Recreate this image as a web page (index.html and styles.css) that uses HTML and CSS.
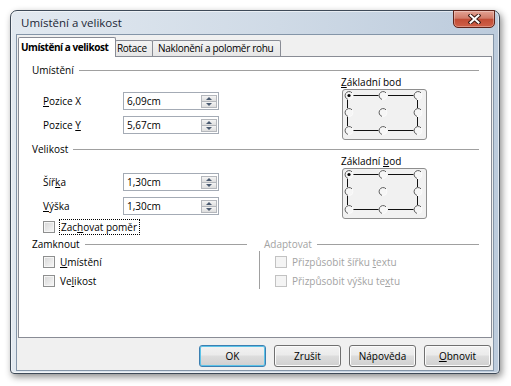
FILE: index.html
```html
<!DOCTYPE html>
<html lang="cs">
<head>
  <meta charset="UTF-8" />
  <title>Umístění a velikost</title>
  <link rel="stylesheet" href="styles.css">
</head>
<body>

  <svg class="defs" width="0" height="0">
    <defs>
      <g id="radio">
        <circle r="4" fill="#f6f6f6" stroke="#fbfbfb"/>
        <path d="M-1 3.9A4 4 0 1 1 3 -2.7" fill="none" stroke="#5c5c5c"/>
      </g>
      <symbol id="basepoint" viewBox="0 0 83 49">
        <path d="M10 5.5H36M45 5.5H71M10 40.5H36M45 40.5H71M4.5 10V18M4.5 27V36M74.5 10V18M74.5 27V36" stroke="#111" fill="none" shape-rendering="crispEdges"/>
        <use href="#radio" x="6" y="5.5"/>
        <use href="#radio" x="40" y="5.5"/>
        <use href="#radio" x="75" y="5.5"/>
        <use href="#radio" x="6" y="22.5"/>
        <use href="#radio" x="40" y="22.5"/>
        <use href="#radio" x="75" y="22.5"/>
        <use href="#radio" x="6" y="40.5"/>
        <use href="#radio" x="40" y="40.5"/>
        <use href="#radio" x="75" y="40.5"/>
        <circle cx="6" cy="5.5" r="1.6" fill="#000"/>
      </symbol>
    </defs>
  </svg>

  <div class="window">
    <div class="titlebar">
      <span class="title">Umístění a velikost</span>
      <button class="close">
        <svg width="13" height="10" viewBox="0 0 13 10">
          <path d="M2.5 1.5L10.5 8.5M10.5 1.5L2.5 8.5" stroke="#3b1a14" stroke-width="4" stroke-linecap="square"/>
          <path d="M2.5 1.5L10.5 8.5M10.5 1.5L2.5 8.5" stroke="#fff" stroke-width="2" stroke-linecap="square"/>
        </svg>
      </button>
    </div>

    <div class="client">
      <div class="tabs">
        <div class="tab active">Umístění a velikost</div>
        <div class="tab tab-rot">Rotace</div>
        <div class="tab tab-skew">Naklonění a poloměr rohu</div>
      </div>

      <div class="page">
        <!-- Umístění -->
        <div class="group">
          <div class="group-head"><span>Umístění</span></div>
          <div class="group-body">
            <div class="fields">
              <div class="field">
                <label><u>P</u>ozice X</label>
                <div class="spin"><span>6,09cm</span><div class="spin-btns"><i class="up"></i><i class="down"></i></div></div>
              </div>
              <div class="field">
                <label>Pozice <u>Y</u></label>
                <div class="spin"><span>5,67cm</span><div class="spin-btns"><i class="up"></i><i class="down"></i></div></div>
              </div>
            </div>
            <div class="basepoint">
              <div class="bp-label"><u>Z</u>ákladní bod</div>
              <div class="bp-box"><svg width="83" height="49"><use href="#basepoint"/></svg></div>
            </div>
          </div>
        </div>

        <!-- Velikost -->
        <div class="group group-size">
          <div class="group-head"><span>Velikost</span></div>
          <div class="group-body">
            <div class="fields fields-size">
              <div class="field">
                <label>Šíř<u>k</u>a</label>
                <div class="spin"><span>1,30cm</span><div class="spin-btns"><i class="up"></i><i class="down"></i></div></div>
              </div>
              <div class="field">
                <label><u>V</u>ýška</label>
                <div class="spin"><span>1,30cm</span><div class="spin-btns"><i class="up"></i><i class="down"></i></div></div>
              </div>
              <div class="check-row">
                <span class="check"></span>
                <span class="focus">Zac<u>h</u>ovat poměr</span>
              </div>
            </div>
            <div class="basepoint">
              <div class="bp-label">Základní <u>b</u>od</div>
              <div class="bp-box"><svg width="83" height="49"><use href="#basepoint"/></svg></div>
            </div>
          </div>
        </div>

        <!-- Zamknout / Adaptovat -->
        <div class="group-row">
          <div class="subgroup lock">
            <div class="group-head"><span>Zamknout</span></div>
            <div class="checks">
              <div class="check-item"><span class="check"></span><span><u>U</u>místění</span></div>
              <div class="check-item"><span class="check"></span><span>Ve<u>l</u>ikost</span></div>
            </div>
          </div>
          <div class="vsep"></div>
          <div class="subgroup adapt disabled">
            <div class="group-head"><span>Adaptovat</span></div>
            <div class="checks">
              <div class="check-item"><span class="check"></span><span>Přizpůsobit šířku <u>t</u>extu</span></div>
              <div class="check-item"><span class="check"></span><span>Přizpůsobit výšku te<u>x</u>tu</span></div>
            </div>
          </div>
        </div>
      </div>

      <div class="buttons">
        <button class="btn default">OK</button>
        <button class="btn">Zrušit</button>
        <button class="btn">Nápověda</button>
        <button class="btn"><u>O</u>bnovit</button>
      </div>
    </div>
  </div>

</body>
</html>
```

FILE: styles.css
```css
html, body {
  margin: 0;
  padding: 0;
}

body {
  width: 511px;
  height: 386px;
  overflow: hidden;
  background: #fff;
  font-family: "Open Sans", "Noto Sans", sans-serif;
  font-size: 10px;
  color: #000;
}

u {
  text-decoration-thickness: 1px;
  text-underline-offset: 1px;
}

.defs {
  position: absolute;
  width: 0;
  height: 0;
}

/* window frame */

.window {
  margin: 10px 0 0 10px;
  width: 490px;
  height: 364px;
  box-sizing: border-box;
  padding: 0 5px 2px;
  display: flex;
  flex-direction: column;
  border: 1px solid #3e4a58;
  border-radius: 7px 7px 4px 4px;
  background: linear-gradient(to right, #e2e9f0, #cfdae6 55%, #bccbdc);
  box-shadow: 2px 3px 7px rgba(0, 0, 0, 0.45), inset 0 0 0 1px rgba(255, 255, 255, 0.55);
}

.titlebar {
  height: 23px;
  margin: 0 -5px;
  padding: 0 4px 0 10px;
  display: flex;
  justify-content: space-between;
  align-items: flex-start;
}

.title {
  line-height: 23px;
  font-size: 11.5px;
  color: #1b2635;
}

.close {
  width: 42px;
  height: 18px;
  margin-top: -1px;
  padding: 0;
  display: flex;
  align-items: center;
  justify-content: center;
  border: 1px solid #5e231a;
  border-radius: 0 0 5px 5px;
  background: linear-gradient(#e4a394, #d17b69 45%, #c24d36 52%, #cf6048);
  box-shadow: inset 0 0 0 1px rgba(255, 255, 255, 0.3);
}

.client {
  flex: 1;
  display: flex;
  flex-direction: column;
  padding: 2px 1px 0;
  background: #f0f0f0;
  border: 1px solid #8495a8;
}

/* tabs */

.tabs {
  display: flex;
  align-items: flex-end;
  height: 20px;
  margin-bottom: -1px;
  position: relative;
  z-index: 1;
}

.tab {
  box-sizing: border-box;
  height: 16px;
  margin-bottom: 1px;
  margin-left: -1px;
  border: 1px solid #898c95;
  border-bottom: none;
  border-radius: 2px 2px 0 0;
  background: linear-gradient(#f3f3f3, #e6e6e6);
  line-height: 14px;
  letter-spacing: -0.3px;
  white-space: nowrap;
}

.tab.active {
  height: 20px;
  width: 98px;
  margin: 0;
  padding-left: 2px;
  background: #fff;
  font-weight: bold;
  letter-spacing: -0.45px;
  line-height: 18px;
}

.tab-rot {
  width: 38px;
  padding-left: 1px;
}

.tab-skew {
  width: 129px;
  padding-left: 5px;
}

.page {
  box-sizing: border-box;
  height: 282px;
  padding: 7px 12px 0 13px;
  background: #fff;
  border: 1px solid #898c95;
}

/* groups */

.group-head {
  display: flex;
  align-items: center;
  height: 12px;
  line-height: 12px;
}

.group-head::after {
  content: "";
  flex: 1;
  margin-left: 5px;
  border-top: 1px solid #a0a0a0;
}

.group-body {
  display: flex;
}

.group-size {
  margin-top: 3px;
}

.fields {
  flex: 1;
  padding: 16px 0 0 11px;
}

.fields-size {
  padding-top: 18px;
}

.field {
  display: flex;
  align-items: center;
  height: 18px;
  margin-bottom: 6px;
}

.field label {
  width: 80px;
}

.spin {
  box-sizing: border-box;
  width: 96px;
  height: 18px;
  padding: 0 1px 0 3px;
  display: flex;
  align-items: center;
  justify-content: space-between;
  border: 1px solid #a4abb5;
  background: #fff;
}

.spin-btns {
  width: 16px;
  height: 13px;
  display: flex;
  flex-direction: column;
}

.spin-btns i {
  flex: 1;
  display: flex;
  align-items: center;
  justify-content: center;
  border: 1px solid #b4b7bc;
  background: linear-gradient(#f4f4f4, #dedede);
}

.spin-btns i + i {
  border-top: none;
}

.spin-btns .up::after {
  content: "";
  border-left: 3px solid transparent;
  border-right: 3px solid transparent;
  border-bottom: 3px solid #4a5a70;
}

.spin-btns .down::after {
  content: "";
  border-left: 3px solid transparent;
  border-right: 3px solid transparent;
  border-top: 3px solid #4a5a70;
}

.basepoint {
  width: 85px;
  margin-right: 52px;
}

.bp-label {
  height: 12px;
  line-height: 12px;
  margin-left: -1px;
  white-space: nowrap;
}

.bp-box {
  box-sizing: border-box;
  width: 85px;
  height: 51px;
  margin-top: 1px;
  border: 1px solid #8e8e8e;
  border-radius: 3px;
  background: #f1f1f1;
}

.bp-box svg {
  display: block;
}

/* checkboxes */

.check {
  box-sizing: border-box;
  width: 12px;
  height: 12px;
  flex: none;
  border: 1px solid #8e8f8f;
  background: linear-gradient(135deg, #d6d6d6, #f8f8f8);
  box-shadow: inset 0 0 0 1px #f6f6f6;
}

.check-row {
  display: flex;
  align-items: center;
  height: 12px;
  margin-top: 2px;
}

.focus {
  margin-left: 4px;
  padding: 1px 2px 1px 1px;
  line-height: 12px;
  border: 1px dotted #000;
}

.group-row {
  display: flex;
  margin-top: 5px;
}

.subgroup.lock {
  width: 215px;
}

.subgroup.adapt {
  flex: 1;
}

.vsep {
  width: 1px;
  height: 38px;
  margin: 13px 4px 0 12px;
  background: #a0a0a0;
}

.checks {
  padding: 6px 0 0 11px;
}

.check-item {
  display: flex;
  align-items: center;
  height: 12px;
  margin-bottom: 7px;
}

.check-item .check + span {
  margin-left: 5px;
}

.disabled {
  color: #a3a3a3;
}

.disabled .check {
  border-color: #c2c2c2;
  background: #f4f4f4;
  box-shadow: none;
}

/* buttons */

.buttons {
  display: flex;
  justify-content: flex-end;
  gap: 8px;
  margin-top: 7px;
  padding-right: 1px;
}

.btn {
  width: 67px;
  height: 22px;
  padding: 0;
  font-family: inherit;
  font-size: 10px;
  color: #000;
  border: 1px solid #707070;
  border-radius: 3px;
  background: linear-gradient(#f2f2f2, #ebebeb 45%, #dddddd 50%, #d0d0d0);
  box-shadow: inset 0 0 0 1px #fbfbfb;
}

.btn.default {
  border-color: #3c7fb1;
  box-shadow: inset 0 0 0 1px #5cc3e8;
}
```
